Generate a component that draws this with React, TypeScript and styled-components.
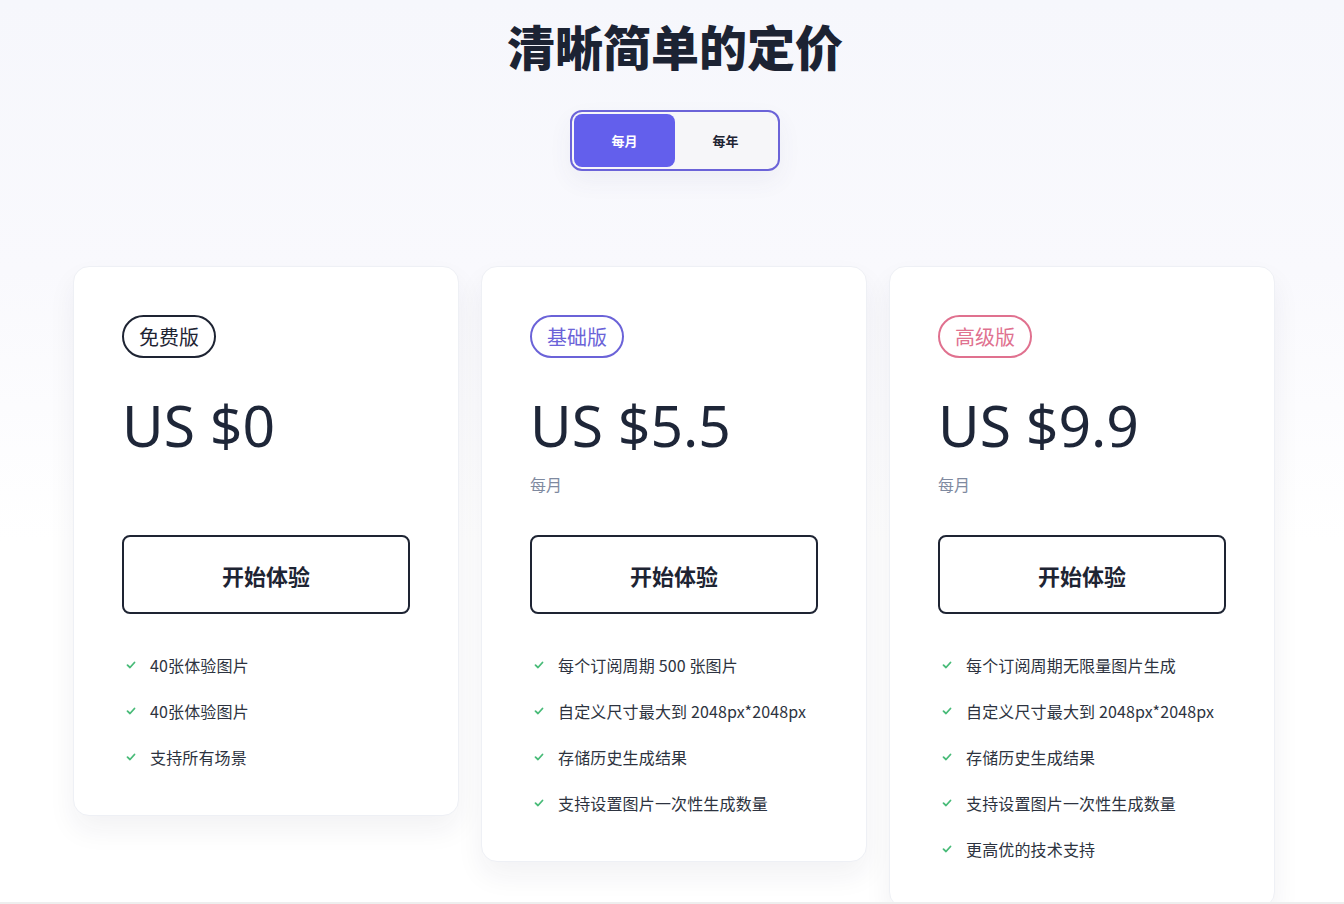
import React, { useState } from "react";
import styled, { createGlobalStyle } from "styled-components";

const GlobalStyle = createGlobalStyle`
  html, body {
    margin: 0;
    padding: 0;
  }
  body {
    font-family: "Noto Sans", "Noto Sans CJK SC", sans-serif;
    color: #1e2433;
    background: #ffffff;
  }
`;

const Page = styled.div`
  height: 902px;
  overflow: hidden;
  background: linear-gradient(180deg, #f6f7fc 0%, #f9f9fd 30%, #ffffff 60%);
  display: flex;
  flex-direction: column;
  align-items: center;
  border-bottom: 2px solid #eeeeee;
`;

const Title = styled.h1`
  margin: 14px 0 0;
  font-family: "Noto Sans CJK SC", sans-serif;
  font-size: 48px;
  font-weight: 900;
  line-height: 62px;
  color: #1c2333;
  padding-left: 6px;
`;

const Toggle = styled.div`
  margin-top: 34px;
  display: flex;
  padding: 2px;
  border: 2px solid #6b63d8;
  border-radius: 12px;
  background: #f6f6f9;
  box-shadow: 0 10px 24px rgba(60, 60, 120, 0.06);
  margin-left: 6px;
`;

const ToggleButton = styled.button<{ $active?: boolean }>`
  width: 101px;
  height: 53px;
  border: none;
  border-radius: 8px;
  cursor: pointer;
  font-family: "Noto Sans CJK SC", sans-serif;
  font-size: 13px;
  font-weight: 700;
  color: ${(p) => (p.$active ? "#ffffff" : "#1e2433")};
  background: ${(p) => (p.$active ? "#635fec" : "transparent")};
`;

const Cards = styled.div`
  margin-top: 95px;
  display: flex;
  align-items: flex-start;
  gap: 22px;
  margin-left: 4px;
  flex-shrink: 0;
`;

const Card = styled.div`
  width: 386px;
  box-sizing: border-box;
  padding: 48px 48px 35px;
  background: #ffffff;
  border: 1px solid #eef0f5;
  border-radius: 16px;
  box-shadow: 0 14px 28px rgba(30, 36, 60, 0.06);
`;

const Badge = styled.span<{ $color: string }>`
  display: inline-flex;
  align-items: center;
  height: 43px;
  box-sizing: border-box;
  padding: 0 15px;
  border: 2px solid ${(p) => p.$color};
  border-radius: 22px;
  color: ${(p) => p.$color};
  font-family: "Noto Sans CJK SC", sans-serif;
  font-size: 20px;
  font-weight: 400;
`;

const Price = styled.div`
  margin-top: 31px;
  font-family: "Noto Sans", sans-serif;
  font-size: 57px;
  font-weight: 400;
  line-height: 72px;
  color: #1e2638;
`;

const Period = styled.div`
  height: 28px;
  margin-top: 11px;
  font-family: "Noto Sans CJK SC", sans-serif;
  font-size: 16px;
  line-height: 24px;
  color: #7f8aa0;
`;

const StartButton = styled.button`
  margin-top: 35px;
  width: 100%;
  height: 79px;
  background: #ffffff;
  border: 2px solid #1e2433;
  border-radius: 8px;
  font-family: "Noto Sans CJK SC", sans-serif;
  font-size: 22px;
  font-weight: 700;
  color: #1e2433;
  cursor: pointer;
`;

const Features = styled.ul`
  list-style: none;
  margin: 28px 0 0;
  padding: 0;
`;

const Feature = styled.li`
  display: flex;
  align-items: center;
  gap: 14px;
  height: 46px;
  padding-left: 4px;
  font-family: "Noto Sans CJK SC", sans-serif;
  font-size: 16px;
  letter-spacing: 0.15px;
  color: #2d3340;
`;

const Check = () => (
  <svg width="10" height="10" viewBox="0 0 10 10" fill="none">
    <path d="M1.5 5.2 L4 7.5 L8.5 2.5" stroke="#48bb78" strokeWidth="1.8" strokeLinecap="round" strokeLinejoin="round" />
  </svg>
);

type Plan = {
  name: string;
  color: string;
  price: string;
  period?: string;
  features: string[];
};

const plans: Plan[] = [
  {
    name: "免费版",
    color: "#1e2433",
    price: "US $0",
    features: ["40张体验图片", "40张体验图片", "支持所有场景"],
  },
  {
    name: "基础版",
    color: "#6b63d8",
    price: "US $5.5",
    period: "每月",
    features: [
      "每个订阅周期 500 张图片",
      "自定义尺寸最大到 2048px*2048px",
      "存储历史生成结果",
      "支持设置图片一次性生成数量",
    ],
  },
  {
    name: "高级版",
    color: "#e0718f",
    price: "US $9.9",
    period: "每月",
    features: [
      "每个订阅周期无限量图片生成",
      "自定义尺寸最大到 2048px*2048px",
      "存储历史生成结果",
      "支持设置图片一次性生成数量",
      "更高优的技术支持",
    ],
  },
];

export default function App() {
  const [yearly, setYearly] = useState(false);
  return (
    <>
      <GlobalStyle />
      <Page>
        <Title>清晰简单的定价</Title>
        <Toggle>
          <ToggleButton $active={!yearly} onClick={() => setYearly(false)}>
            每月
          </ToggleButton>
          <ToggleButton $active={yearly} onClick={() => setYearly(true)}>
            每年
          </ToggleButton>
        </Toggle>
        <Cards>
          {plans.map((plan) => (
            <Card key={plan.name}>
              <Badge $color={plan.color}>{plan.name}</Badge>
              <Price>{plan.price}</Price>
              <Period>{plan.period ?? ""}</Period>
              <StartButton>开始体验</StartButton>
              <Features>
                {plan.features.map((f, i) => (
                  <Feature key={i}>
                    <Check />
                    {f}
                  </Feature>
                ))}
              </Features>
            </Card>
          ))}
        </Cards>
      </Page>
    </>
  );
}
